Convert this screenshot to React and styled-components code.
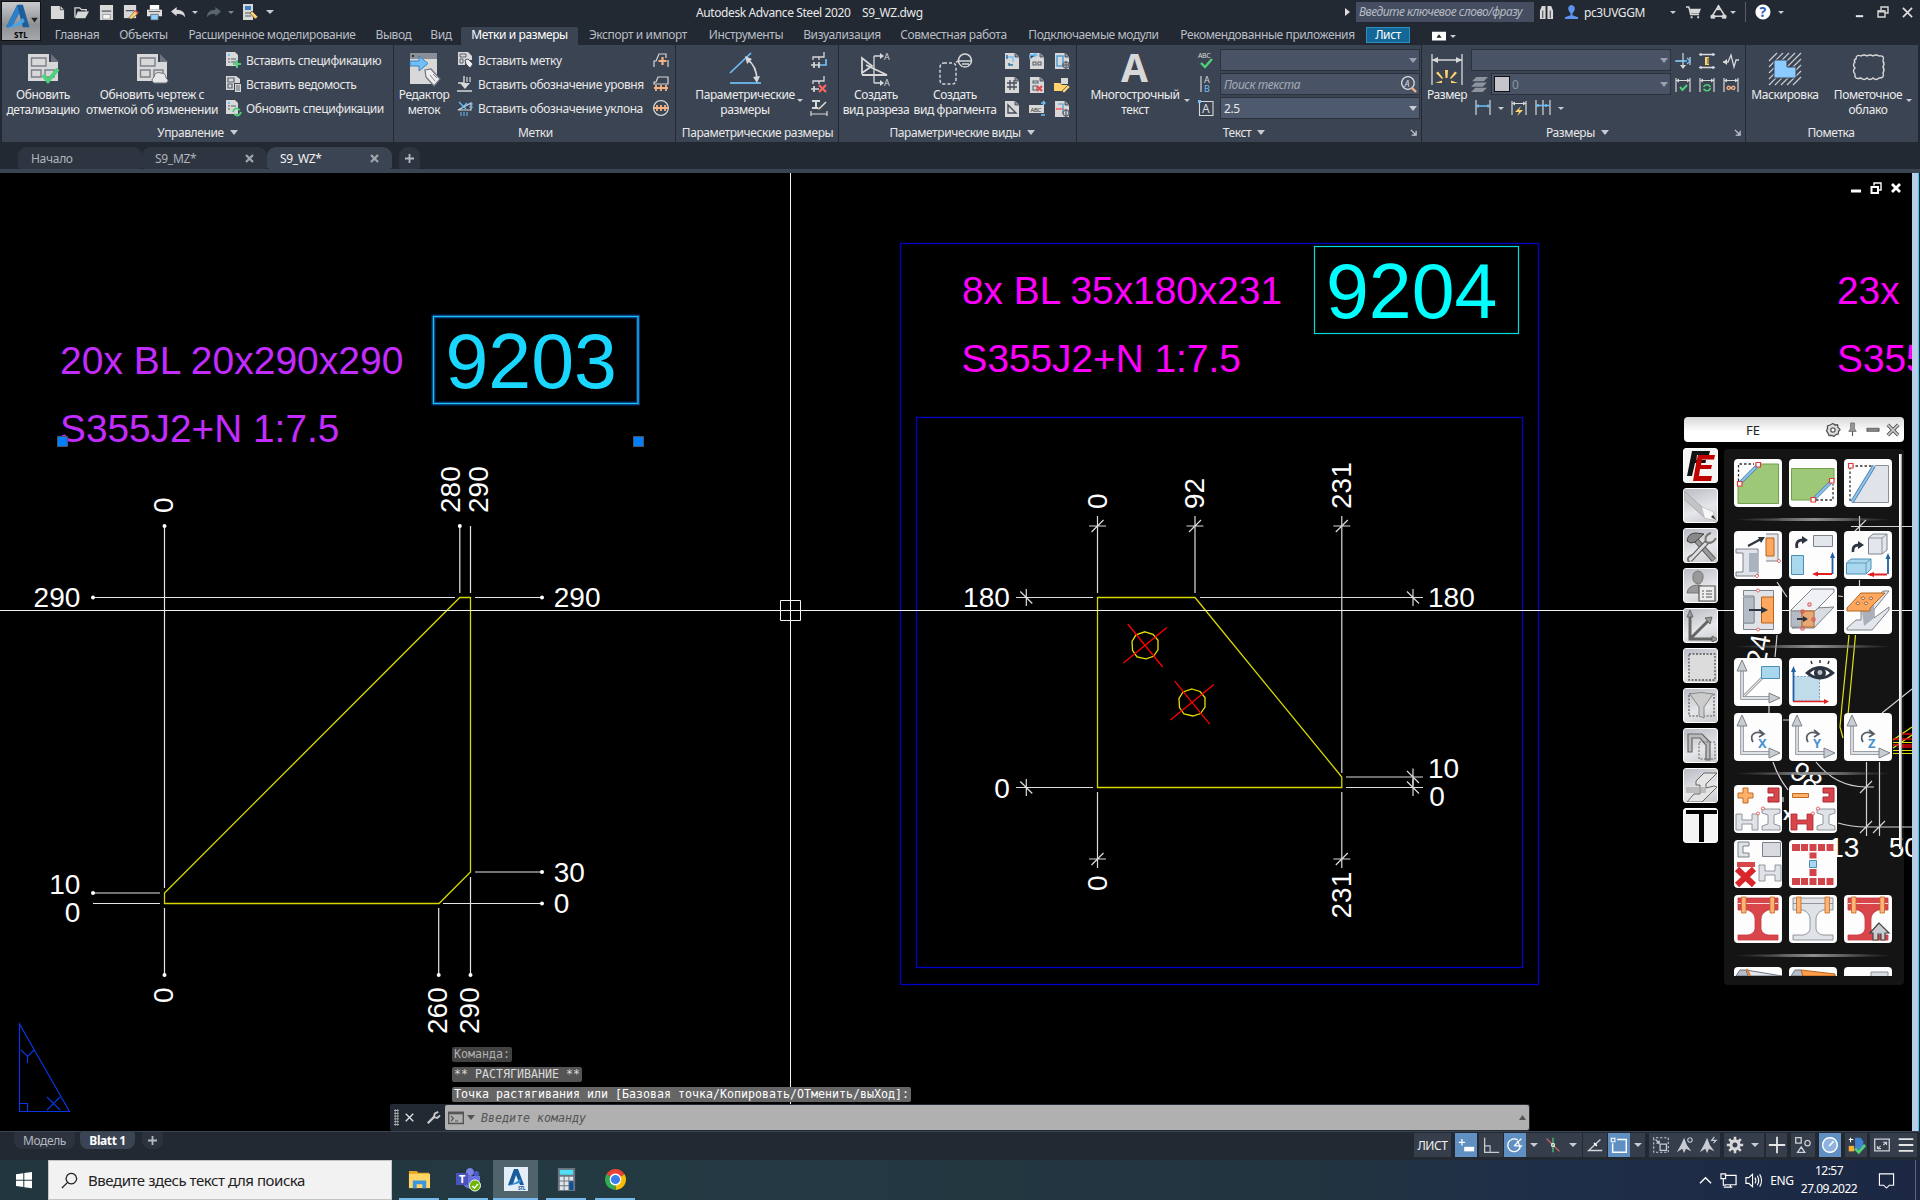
import React from 'react';
import styled, { createGlobalStyle, css } from 'styled-components';

const C = {
  dark: '#222933', panel: '#3b4453', field: '#485365', text: '#e8e8e8', dim: '#b9bdc4',
  g: '#d8d8d8', b: '#6fc0f8', o: '#f6b183', y: '#ffd26b', green: '#4fd07a', red: '#e04a4a',
};
const UI = '"Noto Sans", "Open Sans", sans-serif';

const Global = createGlobalStyle`
  html, body { margin: 0; background: #000; }
  body { width: 1920px; height: 1200px; overflow: hidden; font-family: ${UI}; }
  * { box-sizing: border-box; }
`;

/* ---------- icons: [path, stroke, fill, strokeWidth, dash] ---------- */
const G = C.g, B = C.b, O = C.o, Y = C.y, N = 'none', P = C.panel;
const sheet = [['M1 0H11L15 4V16H1Z', N, G], ['M11 0V4H15', P, '#8d939c', 0.8]];
const axes = [['M8 10V40H38', '#7d828a', N, 3.4], ['M8 10V40H38', '#dfe2e6', N, 1.8], ['M8 2L3 13H13Z', '#7d828a', '#c9cdd3', 1], ['M46 40L35 35V45Z', '#7d828a', '#c9cdd3', 1]];
const turn = ['M19 29C15 22 21 17 29 21M25 17L30 21L25 24', '#555c66', N, 1.7];
const hShape = (x, y, s, f) => [`M${x} ${y}h6v6h10v-6h6v16h-6v-6h-10v6h-6z`, s, f, 0.8];
const iShape = (x, y, s, f) => [`M${x} ${y}h18v4l-6 2v9l6 2v4h-18v-4l6-2v-9l-6-2z`, s, f, 0.8];
const bigI = (s, f) => [
  ['M4 3H44V15H34Q27 18 27 24V34Q28 39 34 40H44V45H4V40H14Q20 39 21 34V24Q21 18 14 15H4Z', s, f, 0.8],
  ['M4 8.500H44', s === '#c83a40' ? '#fff' : '#7d828a', N, 0.8],
  ['M7.500 2h4.500v16h-4.500zM36 2h4.500v16h-4.500z', '#c06a1e', '#ffb376', 0.8],
];
const dimFrame = [['M1 1V15M15 1V15M1 3.500H15', G, N, 1.2], ['M1 3.500L4 1.500V5.500ZM15 3.500L12 1.500V5.500Z', N, G]];

const ICONS = {
  new: [16, [['M1 1H11L15 5V15H1Z', N, G], ['M11 1V5H15', '#333', N, 0.8]]],
  open: [16, [['M1 13V3H6L8 5H13V7', G, N, 1.4], ['M4 7H16L12 14H1Z', N, G]]],
  save: [16, [['M1 0H15V16H1Z', N, G], ['M3 6.500H13', '#555b66', N, 1.4], ['M4 10H12V15H4Z', '#888', '#f4f4f4', 0.8]]],
  saveas: [16, [['M1 0H14V14H1Z', N, G], ['M3 6H12', '#555b66', N, 1.4], ['M6 14L13 6L16 9L9 15Z', '#444', Y, 0.6], ['M13 6L16 9', '#e55', N, 2]]],
  print: [16, [['M3 0H13V5H3Z', N, '#fff'], ['M0 5H16V12H0Z', N, '#e0e0e0'], ['M2 7H14', '#555', N, 1], ['M4 10H12V16H4Z', '#555', '#8fd0ff', 0.8]]],
  undo: [16, [['M0 7L6 2V5C12 5 15 8 15 13C13 10 10 9.500 6 9.500V12Z', N, G]]],
  redo: [16, [['M16 7L10 2V5C4 5 1 8 1 13C3 10 6 9.500 10 9.500V12Z', N, '#5b6370']]],
  props: [16, [['M1 0H11V16H1Z', N, G], ['M3 2H9V6H3Z', N, '#3c7fc0'], ['M3 9H9M3 12H9', '#555', N, 1], ['M8 9L10 7L16 13L13 15Z', '#444', Y, 0.7]]],
  upd: [32, [['M1 1H22V9H31V28H1Z', N, G], ['M24 1L32 9H24Z', N, '#6d7480'], ['M4.500 5H19V13H4.500ZM4.500 17H14V24H4.500ZM18 17H27V24H18Z', '#7a808a', N, 1.4], ['M16 22L21 28L31 16', C.green, N, 4]]],
  updc: [32, [['M1 1H22V9H31V28H1Z', N, G], ['M24 1L32 9H24Z', N, '#6d7480'], ['M4.500 5H19V13H4.500ZM4.500 17H14V24H4.500ZM18 17H27V24H18Z', '#7a808a', N, 1.4], ['M18 30Q14 27 18 24Q19 18 25 20Q30 20 30 25Q34 28 30 30Z', '#6d7480', '#e6e6e6', 1]]],
  spec: [16, [['M1 0H10L13 3V14H1Z', N, G], ['M3 2H5V4H3Z', N, B], ['M3 7H5M6 7H11M3 10H5M6 10H11', '#555b66', N, 1], ['M12 8V16M8 12H16', C.green, N, 2]]],
  ved: [16, [['M1 0H11L15 3V7H9V14H1Z', N, G], ['M3 2H9V6H3ZM3 8H7V12H3Z', '#5b626e', N, 1.2], ['M10 8H16V16H10Z', N, G], ['M11 10H15M11 12H15M11 14H15', '#555b66', N, 0.9]]],
  specu: [16, [['M1 0H10L13 3V14H1Z', N, G], ['M3 2H5V4H3Z', N, B], ['M3 6H5M6 6H11M3 9H5', '#555b66', N, 1], ['M8 12Q9 8 12 8.500L15 10M16 12Q15 15.500 12 15.500L9 14', C.green, N, 1.8]]],
  editor: [32, [['M2 0H29V31H2Z', N, G], ['M2 0H29V6H2Z', N, '#8a8f97'], ['M4 2H6V4H4Z', N, '#333'], ['M2 8H11V3L20 10.500L11 18V13H2Z', '#2d6fa8', B, 0.8], ['M17 17L23 16L32 26L26 33L18 24Z', '#6d7480', '#eee', 1.2], ['M22 22L27 28M25 21L29 25', '#888', N, 1]]],
  mark: [16, [['M1 0H11L15 4V8H8V13H1Z', N, G], ['M3 2H9V5H3ZM3 7H6V11H3Z', '#5b626e', N, 1], ['M8 8L11 7L16 12L13 16L9 12Z', '#4b5260', '#eee', 1]]],
  level: [16, [['M1 7H7V0M0 15H15', G, N, 1.4], ['M3 7H13L8 13Z', N, G], ['M10 1V6M13 1V6', G, N, 1.2]]],
  slope: [16, [['M1 10L14 3V10Z', G, N, 1.2], ['M2 2L9 9M10 3L4 9', B, N, 1.2], ['M12 4H16M12 7H16M4 12V16M7 12V16M10 12V16', B, N, 1]]],
  r1: [16, [['M1 15V9H3L6 2H13V6M15 8V15', G, N, 1.2], ['M9.500 5V13M5.500 9H13.500', O, N, 2.2]]],
  r2: [16, [['M1 8V6H3L5 1H15V8Z', G, N, 1.2], ['M1 12H15M3 9V15M8 9V15M13 9V15', O, N, 1.8]]],
  r3: [16, [['M8 0.700A7.300 7.300 0 1 1 7.900 0.700Z', G, N, 1.2], ['M1 8H15M4 5V11M8 5V11M12 5V11', O, N, 1.8]]],
  angle: [32, [['M1 20L22 0', B, N, 1.7], ['M1 30H32', B, N, 1.7], ['M18 6Q28 13 28 28', G, N, 1.6], ['M16 3L23 6L18 11ZM24 24L28 30L31 23Z', N, G]]],
  p1: [16, [['M2 8V5H8V8M8 5H13V0', G, N, 1.3], ['M0 13H9M3 10V16M8 10V16', G, N, 1.7], ['M9 13H15V7', B, N, 1.7]]],
  p2: [16, [['M2 8V5H8V8M8 5H13V0', G, N, 1.3], ['M0 13H8M3 10V16', G, N, 1.7], ['M8 9L15 16M15 9L8 16', '#ff6464', N, 2.2]]],
  p3: [16, [['M1 1H9M5 1V8M1 8H7', G, N, 2], ['M8 9L15 2', G, N, 1.6], ['M7 10Q6 7 10 7Z', N, '#d8bd84'], ['M0 14H16M0 11V16M16 11V16', G, N, 1.2]]],
  cut: [32, [['M2 5V20L12 13ZM6 12L27 22H2', G, N, 1.8], ['M14 3V30M14 3H22M14 30H22', G, N, 1.3], ['M20 0L24 3L20 6ZM20 27L24 30L20 33Z', N, G], { t: 'A', x: 24, y: 7, s: 9, c: G }, { t: 'A', x: 24, y: 33, s: 9, c: G }]],
  frag: [32, [['M5 10H13Q17 10 17 15V27Q17 31 13 31H5Q1 31 1 27V15Q1 10 5 10Z', G, N, 1.4, '3 2'], ['M17 9L20 8', G, N, 1.4], ['M26 1A6.500 6.500 0 1 1 25.900 1ZM20 8H32M23 11H30', G, N, 1.4]]],
  g1: [16, [...sheet, ['M3 4H9V9', B, N, 1.3], ['M3 2V6M5 10V12H9', '#2c6ea3', N, 1.5]]],
  g2: [16, [...sheet, ['M1 6V2H7M5 0L8 2L5 4', B, '#3b4453', 1.5], ['M4 9H7V12H4ZM9 9H12V12H9Z', '#5b626e', N, 1.1]]],
  g3: [16, [...sheet, ['M3 3H9V13H3Z', '#4d9fd8', N, 1.5], ['M9 12A3 3 0 1 1 9 12.100M12 8V16M8 12H16', '#666d78', N, 1.5]]],
  g4: [16, [...sheet, ['M3 6H13M3 10H13M6 3V13M10 3V13', '#444c58', N, 1.3]]],
  g5: [16, [...sheet, ['M4 4H9V6H4ZM4 9H8V13H4Z', '#5b626e', N, 1.1], ['M8 9L13 14M13 9L8 14', '#e04a4a', N, 2]]],
  g6: [16, [['M7 1H14V7H7Z', N, G], ['M0 6H6L8 8H14L11 14H0Z', N, Y], ['M8 14L14 8L16 10L10 16Z', '#555', Y, 0.8]]],
  g7: [16, [...sheet, ['M4 4V12H12Z', '#444c58', N, 1.4]]],
  g8: [16, [['M0 4H15V12H0Z', N, G], { t: 'ABC', x: 1.5, y: 10.5, s: 6, c: '#333' }, ['M12 2L16 2M12 14H16M14 0L16 2L14 4', B, N, 1.3]]],
  g9: [16, [...sheet, ['M2 8H10', '#ff6464', N, 1.6], ['M4 3H9V13', '#4d9fd8', N, 1.2], ['M9 12A3 3 0 1 1 9 12.100M12 8V16', '#666d78', N, 1.5]]],
  bigA: [32, [{ t: 'A', x: 2, y: 29, s: 39, c: G, b: 1 }]],
  abc: [16, [{ t: 'ABC', x: 0, y: 5.5, s: 7, c: G }, ['M3 11L7 15L14 7', C.green, N, 2.4]]],
  ab: [16, [['M3 0V16', G, N, 1.2], { t: 'A', x: 6, y: 7, s: 9, c: G }, { t: 'B', x: 6, y: 16, s: 9, c: B }]],
  abox: [16, [['M1.500 1.500H15V15.500H1.500Z', G, N, 1.1], { t: 'A', x: 4, y: 13, s: 12, c: G }, ['M0 0H3V3H0Z', N, B]]],
  find: [16, [['M7 0.700A6.300 6.300 0 1 1 6.900 0.700Z', G, N, 1.2], ['M11 12L15 16', O, N, 2.4], { t: 'A', x: 3.5, y: 10.5, s: 9, c: G }]],
  dim: [32, [['M1 1V32M31 1V32M1 7H31', G, N, 1.3], ['M1 7L7 4V10ZM31 7L25 4V10Z', N, G], ['M14 17H17L16.500 25H14.500ZM5 20L7 18.500L12 25L11 26ZM26 20L24 18.500L19 25L20 26ZM4 30L11 27.500V30ZM27 30L20 27.500V30Z', N, Y]]],
  d1: [16, [['M0 8H10M8 0V14M15 4V12', G, N, 1.2], ['M1 8H12M12 5L15 8L12 11', B, N, 1.4], ['M5 12L8 16L11 12Z', N, G]]],
  d2: [16, [['M0 1.500H16M0 14.500H16M2 0V3M14 0V3M2 13V16M14 13V16', G, N, 1.3], ['M6 4H10V12H6Z', N, Y], ['M8 6H10M8 8H10M8 10H10', P, N, 1]]],
  d3: [16, [['M0 9H5L8 2L11 14L13 7H16', G, N, 1.3], ['M0 9L4 6V12Z', N, G]]],
  d4: [16, [...dimFrame, ['M5 10L7.500 13L12 8', C.green, N, 2]]],
  d5: [16, [...dimFrame, ['M4.500 10Q6 7 9.500 8L11.500 10M11.500 11Q10 14.500 6.500 13.500L4.500 12', C.green, N, 1.6]]],
  d6: [16, [...dimFrame, ['M8 11Q5 7.500 4 11Q5 14 8 11Q11 7.500 12 11Q11 14 8 11Z', O, N, 1.3]]],
  d7: [16, [['M1 0V15M15 0V15', G, N, 1.2], ['M1 6H15M3 4.500V7.500M13 4.500V7.500', B, N, 1.5]]],
  d8: [16, [...dimFrame, ['M10 6L4 12H8L6 16L12 10H8Z', N, Y]]],
  d9: [16, [['M1 0V15M8 0V15M15 0V15', G, N, 1.2], ['M1 5.500H15M3 4V7M11 4V7', B, N, 1.4]]],
  layers: [16, [['M5 1H16L12 5H1ZM4 6H15L11 10H0ZM4 11H15L11 15H0Z', N, '#8e949d']]],
  mask: [32, [['M0 8L8 0M0 14L14 0M0 20L20 0M0 26L26 0M0 32L32 0M6 32L32 6M12 32L32 12M18 32L32 18M24 32L32 24', '#c9ccd1', N, 1.2], ['M5 7H18V14H27V25H5Z', P, '#8ccbff', 1]]],
  cloud: [32, [['M4 6Q4 1 9 3Q12 1 15 3Q18 1 21 3Q24 1 27 3Q33 2 31 8Q33 11 31 14Q33 17 31 20Q33 25 27 25Q24 28 21 25Q18 28 15 25Q12 28 9 25Q2 27 3 21Q0 18 3 15Q0 12 3 9Q1 7 4 6Z', G, N, 1.4]]],
  bino: [16, [['M1 6L3 1H7V15H1ZM9 1H13L15 6V15H9Z', N, G], ['M4 6V14M12 6V14', '#333', N, 1]]],
  user: [16, [['M8 0Q13 1 11 6L9 9V11L15 13V15H1V13L7 11V9L5 6Q3 1 8 0Z', N, '#5e94ef']]],
  cart: [16, [['M0 2H3L5 10H14', G, N, 1.6], ['M4 4H16L14 9H5Z', N, G], ['M5 12H7V14H5ZM12 12H14V14H12Z', N, G]]],
  tri: [16, [['M8 1L1 12H15Z', G, N, 1.6], ['M8 0L10 5H6ZM0 11H4V14H0ZM12 11H16V14H12Z', G, G, 1]]],
  help: [16, [['M8 0.500A7.500 7.500 0 1 1 7.900 0.500Z', N, '#fff'], { t: '?', x: 4.5, y: 13, s: 14, c: '#2d62b8', b: 1 }]],
  wmin: [12, [['M2 10H10', '#e6e6e6', N, 2.2]]],
  wres: [12, [['M4 4V1H11V7H8M1 5H8V11H1Z', '#d8d8d8', N, 1.4], ['M1 5.500H8', '#d8d8d8', N, 2]]],
  wx: [12, [['M1 1L11 11M11 1L1 11', '#e0e0e0', N, 1.8]]],
  dmin: [12, [['M1 9H11', '#fff', N, 3]]],
  dres: [12, [['M4 3.500V1H11V8H8.500', '#fff', N, 1.4], ['M1.500 5H8V11H1.500Z', '#fff', N, 2]]],
  dx: [12, [['M2 2L10 10M10 2L2 10', '#fff', N, 2.8]]],
  ribbonbtn: [16, [['M1 4H15V12H1Z', '#fff', '#fff', 2], ['M5 10L8 6L11 10Z', N, '#222']]],
  tabx: [9, [['M1 1L8 8M8 1L1 8', '#a2a7ae', N, 2.2]]],
  plus: [9, [['M4.500 0V9M0 4.500H9', '#b4b8bf', N, 1.8]]],
  wrench: [16, [['M2 14L9 7', '#c8c8c8', N, 2.6], ['M14 1L10 3L9 7L13 8L16 5', '#c8c8c8', N, 2.2]]],
  prompt: [16, [['M0.700 2.500H15.300V13.500H0.700Z', '#555', N, 1.4], ['M0 3H16', '#555', N, 2.6], ['M3 6L5.500 8.500L3 11M7 11H10', '#555', N, 1.1]]],
  launcher: [8, [['M1 1L6 6M7 2V7H2', '#c8ccd2', N, 1.4]]],
  s1: [22, [['M3 8H10M6.500 4.500V11.500', '#fff', N, 1.4], ['M9 13H20V18H9Z', N, '#fff']]],
  s2: [22, [['M4 3V19H20', '#c8ccd2', N, 1.4], ['M4 12H10V19', '#c8ccd2', N, 1.2]]],
  s3: [22, [['M14 5.500A7 7 0 1 0 17 12M10 12H19M10 12L18 4', '#fff', N, 1.5], ['M13 7Q16 9 16 14', '#fff', N, 1.3]]],
  s4: [22, [['M4 4L18 18', '#e06a6a', N, 1.3], ['M11 3V19', '#4fd07a', N, 1.3], ['M9.500 9.500H12.500V12.500H9.500Z', '#fff', N, 1]]],
  s5: [22, [['M19 17H4L17 5', '#d0d3d8', N, 1.5], ['M10 9L13 12', '#fff', N, 2]]],
  s6: [22, [['M9 5H19V19H4V9', '#fff', N, 1.6], ['M2.500 3.500H6.500V7.500H2.500Z', '#fff', N, 1.2]]],
  s7: [22, [['M3 5V3H19V19H3V5', '#c8ccd2', N, 1.2, '2.5 2'], ['M10 10H17V17H10ZM5 5L9 9M9 6V9H6', '#c8ccd2', N, 1.4]]],
  s8: [22, [['M10 3L13 11L18 18L12 15L10 20L8 15L2 19L7 10Z', N, '#c8ccd2'], ['M16.500 3A2.500 2.500 0 1 1 16.400 3', '#c8ccd2', N, 1.2]]],
  s9: [22, [['M10 3L13 11L18 18L12 15L10 20L8 15L2 19L7 10Z', N, '#c8ccd2'], ['M18 2L15 6H20L17 9', '#c8ccd2', N, 1.3]]],
  gear: [22, [['M11 6.500A4.500 4.500 0 1 1 10.900 6.500Z', '#d8d8d8', N, 3.4], ['M11 2V6M11 16V20M2 11H6M16 11H20M4.600 4.600L7.500 7.500M14.500 14.500L17.400 17.400M17.400 4.600L14.500 7.500M7.500 14.500L4.600 17.400', '#d8d8d8', N, 2.8]]],
  s11: [22, [['M11 2V20M2 11H20', '#e6e6e6', N, 2]]],
  s12: [22, [['M3 3H9V9H3ZM16 6A3 3 0 1 1 15.900 6ZM9 13L13 19H5Z', '#d0d3d8', N, 1.4]]],
  s13: [22, [['M11 3A8 8 0 1 1 10.900 3Z', '#fff', '#8fb3de', 1.6], ['M10 12L15 7', '#fff', N, 1.6]]],
  s14: [22, [['M10 3H16L19 7V16H10Z', N, '#3f82d0'], ['M3 5H8M5 3V8', '#fff', N, 1.2], ['M3 12H9V18H3Z', N, '#f2b134'], ['M10 15L14 19L21 11', C.green, N, 3]]],
  s15: [22, [['M3 4.500H19V17.500H3Z', '#d0d3d8', N, 1.4], ['M12 8H16V11M16 8L12.500 11M6 12V15H10M6 15L9.500 12', '#d0d3d8', N, 1.2]]],
  s16: [22, [['M3 4.500H19M3 11H19M3 17.500H19', '#e6e6e6', N, 2]]],
  start: [16, [['M0 2.300L7.300 1.300V7.700H0ZM8.300 1.100L16 0V7.700H8.300ZM0 8.700H7.300V15L0 14ZM8.300 8.700H16V16.300L8.300 15.200Z', N, '#fff']]],
  lens: [18, [['M11 1.500A5.500 5.500 0 1 1 10.900 1.500ZM7 11L1 17', '#222', N, 1.4]]],
  folder: [24, [['M1 3H9L11 5H22V20H1Z', N, '#e8a41c'], ['M1 6H23V21H1Z', N, '#ffd566'], ['M5 21V13H19V21H15V17H9V21Z', N, '#3a96dd']]],
  teams: [24, [['M14 1A4 4 0 1 1 13.900 1Z', N, '#7b83eb'], ['M20.500 4A2.800 2.800 0 1 1 20.400 4Z', N, '#5059c9'], ['M7 9H24V16Q24 21 17 22Q9 22 7 17Z', N, '#6a72dc'], ['M0 6H12V18H0Z', N, '#4b53bc'], { t: 'T', x: 3, y: 16, s: 11, c: '#fff', b: 1 }, ['M19 13A5.500 5.500 0 1 1 18.900 13Z', '#fff', '#6bb700', 1], ['M16 19L18.500 21L22 17', '#fff', N, 1.6]]],
  aslogo: [24, [['M0 0H24V24H0Z', N, '#e3eef9'], ['M4 18L10 2H14L20 18H16L12 8L9 17Q7 19 4 18Z', N, '#175c99'], ['M4 18Q12 16 16 12L17 15Q11 19 4 18Z', N, '#3a92d8'], { t: 'STL', x: 14, y: 23, s: 5, c: '#175c99', b: 1 }]],
  calc: [24, [['M3 0H21V24H3Z', N, '#6b7580'], ['M5 2H19V7H5Z', N, '#4fe0f8'], ['M5 9H9V13H5ZM10 9H14V13H10ZM15 9H19V13H15ZM5 14H9V18H5ZM10 14H14V18H10ZM5 19H9V23H5ZM10 19H14V23H10Z', N, '#dfe5ea'], ['M15 14H19V23H15Z', N, '#0f4f9e']]],
  chrome: [24, [['M12 12L2.500 6.500A11 11 0 0 1 21.500 6.500Z', N, '#ea4335'], ['M12 12L21.500 6.500A11 11 0 0 1 12 23Z', N, '#fbbc05'], ['M12 12L12 23A11 11 0 0 1 2.500 6.500Z', N, '#34a853'], ['M12 6.500A5.500 5.500 0 1 1 11.900 6.500Z', '#fff', '#3b7ded', 1.4]]],
  chev: [14, [['M1 10L7 4L13 10', '#fff', N, 1.5]]],
  net: [18, [['M5 3.500H17V13.500H5M4 16H13M11 13V16', '#fff', N, 1.3], ['M1 2H6V7H1ZM3.500 7V14H6', '#fff', N, 1.2]]],
  snd: [18, [['M1 6H4L8 2.500V15.500L4 12H1Z', '#fff', N, 1.2], ['M10.500 6Q12.500 9 10.500 12M13 4Q16 9 13 14M15.500 2.500Q19.500 9 15.500 15.500', '#fff', N, 1.2]]],
  note: [18, [['M1.500 2H16.500V14H12L9 17L6 14H1.500Z', '#fff', N, 1.2]]],
  pgear: [16, [['M8 1.500L10 3L12.500 2.800L13 5.500L15 7.500L13.500 9.500L13.300 12L11 12.500L9 14.500L7 13.500L4 13.500L3 11L1.500 9L2.500 6.500L2.500 4L5 3Z', '#555', '#ddd', 1.3], ['M8 5.800A2.200 2.200 0 1 1 7.900 5.800Z', '#555', '#fff', 1.3]]],
  pin: [16, [['M6 1H10V7L12 10H4L6 7Z', '#666', '#999', 0.8], ['M8 10V15', '#555', N, 1.2]]],
  pmin: [16, [['M1 6H15V9.500H1Z', '#444', '#888', 0.8]]],
  px: [16, [['M2 2L14 14M14 2L2 14', '#555', N, 4], ['M2 2L14 14M14 2L2 14', '#ccc', N, 2]]],
  /* palette categories, 35px */
  c0: [35, [['M8 2H26L25 6H13L12.500 11H22L21.500 14H11L8 27H3Z', N, '#111'], ['M14 6H31L30 10.500H18L17 16H28L27 20H16L15 27H28L27 32H9L12.500 12Z', N, '#c00000']]],
  c1: [35, [['M0 2L18 18L29 23L31 31L21 29L0 10Z', '#aaa', '#c2c4c8', 1], ['M18 18L29 23L31 31L21 29Z', N, '#f6f6f6'], ['M27 28L32 31L29 26Z', N, '#333']]],
  c2: [35, [['M11 10L30 31', '#555', N, 5.5], ['M11 10L30 31', '#999', N, 3.5], ['M3 12Q4 4 12 4L20 5L11 13L7 14Z', '#444', '#888', 1], ['M6 31L24 12', '#555', N, 5], ['M6 31L24 12', '#ddd', N, 3], ['M27 4Q20 6 22 13Q28 16 32 9M8 26Q1 29 6 34', '#777', '#ddd', 2]]],
  c3: [35, [['M14 2Q20 3 19 9Q18 15 14 15Q9 14 9 9Q8 3 14 2ZM3 24Q4 16 14 16Q22 17 23 24Z', '#777', '#999', 1], ['M15 17H31V32H15Z', '#555', '#eee', 1.2], ['M18 22H20M22 22H28M18 25H20M22 25H28M18 28H20M22 28H28', '#555', N, 1.2]]],
  c4: [35, [['M6 5V30H31M6 30L26 10', '#666', N, 3], ['M3 8L6 1L9 8ZM28 27L34 30L28 33ZM21 9L28 8L26 15Z', '#555', '#999', 0.8]]],
  c5: [35, [['M5 5H31V31H5Z', '#555', '#dcdcdc', 1.3, '2 1.5']]],
  c6: [35, [['M5 5H30V27H5Z', '#555', N, 1.2, '2 1.5'], ['M6 5Q17 2 29 5L20 18V29L15 27V18Z', '#888', '#ccc', 1]]],
  c7: [35, [['M4 5H18L26 13V31H22V16L16 9H8V23H4Z', '#666', '#bbb', 1.2], ['M15 13H31V30H15Z', '#666', N, 1, '2 1.5']]],
  c8: [35, [['M12 12L20 4H33L22 15V19L30 17L33 18L18 33H3L10 25H16V16H12Z', '#666', '#e4e4e4', 1], ['M2 18H22V24H2Z', N, '#a8a8a8aa']]],
  c9: [35, [['M2 1H33V5H20V34H15V5H2Z', N, '#000']]],
  /* palette commands, 48px */
  f0: [48, [['M24 5H44.500V44.500H4V26Z', '#72a04e', '#9dc877', 1], ['M4.500 22V5H20', '#333', N, 1.3, '2.5 2'], ['M6 24L24 6', '#4c7fa8', N, 3.6], ['M6 24L24 6', '#8cc4f2', N, 2], ['M3.500 22.500h4.500v4.500h-4.500zM22 3.500h4.500v4.500h-4.500z', '#e03c3c', '#fff', 1.2]]],
  f1: [48, [['M2.500 9.500H45V21L23 41H2.500Z', '#72a04e', '#9dc877', 1], ['M27 41H44V25', '#333', N, 1.3, '2.5 2'], ['M25 40L42 23', '#4c7fa8', N, 3.6], ['M25 40L42 23', '#8cc4f2', N, 2], ['M22 38.500h4.500v4.500h-4.500zM40.500 19.500h4.500v4.500h-4.500z', '#e03c3c', '#fff', 1.2]]],
  f2: [48, [['M31 6.500H44.500V43.500H8Z', '#8a9099', '#e0e4ea', 1], ['M6 42V7H28', '#333', N, 1.3, '2.5 2'], ['M8 43L30 7', '#4c7fa8', N, 3.6], ['M8 43L30 7', '#8cc4f2', N, 2], ['M4.500 4.500h4.500v4.500h-4.500z', '#e03c3c', '#fff', 1.2]]],
  f3: [48, [['M2 18H24V45H2V41H9V22H2Z', '#7d828a', '#e0e4ea', 1], ['M15 22H24V41H15Z', N, '#aab2bf'], ['M32 3H44V30H32', '#7d828a', '#e6e8ec', 1], ['M32 7H40V25H32Z', '#b5641c', '#ffa75e', 1], ['M14 15L27 8', '#2b3440', N, 2.2], ['M24 6L31 6L27 12Z', N, '#2b3440'], ['M23 43.500a1.500 1.500 0 1 1-.1 0zM45 28.500a1.500 1.500 0 1 1-.1 0z', '#e05050', '#fff', 1]]],
  f4: [48, [['M2.500 24.500H14.500V43.500H2.500Z', '#4c8fb5', '#a9d8ee', 1], ['M24.500 4.500H43.500V15.500H24.500Z', '#7d828a', '#e3e6ec', 1], ['M8 17Q6 9 14 9', '#2b3440', N, 2.8], ['M13 5L19 9L13 13Z', N, '#2b3440'], ['M43.500 43V24', '#1f5fa8', N, 1.8], ['M41 27L43.500 21L46 27Z', N, '#1f5fa8'], ['M43 43H26', '#e02020', N, 1.8], ['M29 40.500L23 43L29 45.500Z', N, '#e02020']]],
  f5: [48, [['M24.500 7L29 3H43V19L38 23H24.500Z', '#7d828a', '#e3e6ec', 1], ['M24.500 7H38V23M38 7L43 3', '#7d828a', N, 0.8], ['M2.500 32L7 28H27V38L22 43H2.500Z', '#4c8fb5', '#a9d8ee', 1], ['M2.500 32H22V43M22 32L27 28', '#4c8fb5', N, 0.8], ['M9 21Q8 14 15 14', '#2b3440', N, 2.8], ['M14 10L20 14L14 18Z', N, '#2b3440'], ['M44 43V25', '#1f5fa8', N, 1.8], ['M41.500 28L44 22L46.500 28Z', N, '#1f5fa8'], ['M43 43.500H26', '#e02020', N, 1.8], ['M30 41L23 43.500L30 46Z', N, '#e02020']]],
  f6: [48, [['M9.500 4.500H39.500V43.500H9.500V37H20V10H9.500Z', '#7d828a', '#dfe3e8', 1], ['M9.500 11H20V37H9.500Z', '#8a9099', '#b4bcc8', 1], ['M27.500 11H39.500V37H27.500Z', '#b5641c', '#ffa75e', 1], ['M15 24H29', '#2b3440', N, 2], ['M27 20.500L34 24L27 27.500Z', N, '#2b3440'], ['M24 3a1.500 1.500 0 1 1-.1 0zM24 42a1.500 1.500 0 1 1-.1 0z', '#e05050', '#fff', 1]]],
  f7: [48, [['M12 40L22 31V22H27L45 21L25 42H3Z', '#7d828a', '#d9dce2', 1], ['M2 24L23 3H45V6L26 25H2Z', '#7d828a', '#f0f1f4', 1], ['M2 25H13V41H2Z', '#7d828a', '#b4bac4', 0.8], ['M13 25H25V41H13Z', '#b5641c', '#e6a876', 1], ['M8 33H15', '#2b3440', N, 2], ['M14 30L19 33L14 36Z', N, '#2b3440'], ['M12 24h3v3h-3zM19 17h3v3h-3zM12 41h3v3h-3zM23 32h3v3h-3z', '#e05050', N, 1]]],
  f8: [48, [['M3 42L12 34H17V24L30 14V32L45 21V24L28 44H3Z', '#7d828a', '#e3e6ec', 1], ['M28 26L45 5H39L24 22Z', '#7d828a', '#e3e6ec', 1], ['M18 25L30 18V32L20 40Z', N, '#aab0ba'], ['M3 22L17 7H41L26 22V25H3Z', '#b5641c', '#ffa75e', 1], ['M19 11a1.800 1.300 0 1 1-.1 0zM27 11a1.800 1.300 0 1 1-.1 0zM14 16a1.800 1.300 0 1 1-.1 0zM22 16a1.800 1.300 0 1 1-.1 0z', '#a85a18', '#e8e8e8', 1]]],
  f9: [48, [...axes, ['M10 38L29 19', '#7d828a', N, 2.6], ['M10 38L29 19', '#e8e8e8', N, 1.2], ['M27.500 8.500H45.500V20.500H27.500Z', '#4c8fb5', '#a9d8ee', 1]]],
  f10: [48, [['M4.500 18.500H30.500V43H4.500Z', '#7a9fb5', '#c0dcea', 1, '2 1.5'], ['M4.500 43V13', '#1f5fa8', N, 1.8], ['M2 14L4.500 8L7 14Z', N, '#1f5fa8'], ['M4 43.500H36', '#e02020', N, 1.6], ['M35 41L40 43.500L35 46Z', N, '#e02020'], ['M16 15Q31 1 46 15Q31 28 16 15Z', N, '#2b3440'], ['M21 15Q31 6 41 15Q31 23 21 15Z', N, '#fff'], ['M31 9A6 6 0 1 1 30.900 9Z', N, '#2b3440'], ['M31 12A2.500 2.500 0 1 1 30.900 12Z', N, '#b8bcc2'], ['M31 2V5M22 3L23 6M40 3L39 6', '#2b3440', N, 1.5]]],
  f11: [48, [...axes, turn, { t: 'X', x: 24, y: 35, s: 13, c: '#4a94cf', b: 1 }]],
  f12: [48, [...axes, turn, { t: 'Y', x: 24, y: 35, s: 13, c: '#4a94cf', b: 1 }]],
  f13: [48, [...axes, turn, { t: 'Z', x: 24, y: 35, s: 13, c: '#4a94cf', b: 1 }]],
  f14: [48, [['M9 3H14V8H19V13H14V18H9V13H4V8H9Z', '#c06a1e', '#ffb06a', 1], ['M34 3H45V17H34V12H40V8H34Z', '#a82c32', '#d8454b', 1], hShape(2, 29, '#7d828a', '#dfe2e6'), iShape(28, 24, '#7d828a', '#dfe2e6'), ['M24 27a1.500 1.500 0 1 1-.1 0zM29 22a1.500 1.500 0 1 1-.1 0z', '#e05050', '#fff', 1]]],
  f15: [48, [['M3.500 8.500H19.500V12.500H3.500Z', '#c06a1e', '#ffb06a', 1], ['M34 3H45V17H34V12H40V8H34Z', '#a82c32', '#d8454b', 1], hShape(2, 29, '#a82c32', '#d8454b'), iShape(28, 24, '#7d828a', '#dfe2e6'), ['M24 27a1.500 1.500 0 1 1-.1 0zM29 22a1.500 1.500 0 1 1-.1 0z', '#e05050', '#fff', 1]]],
  f16: [48, [['M4 2H15V6H9V13H15V17H4Z', '#7d828a', '#dfe2e6', 1], ['M28.500 2.500H46.500V16.500H28.500Z', '#7d828a', '#d8dbe0', 1], ['M3 22H21V27H3Z', N, '#d8454b'], ['M3 29L20 45M20 29L3 45', '#d8262c', N, 6], hShape(25, 25, '#7d828a', '#dfe2e6')]],
  f17: [48, [['M3 4h8v7h-8zM12 4h7v7h-7zM20.500 4h7v7h-7zM29 4h7v7h-7zM37.500 4h7v7h-7zM20.500 12.500h7v6h-7zM20.500 29h7v7h-7zM3 38h8v7h-8zM12 38h7v7h-7zM20.500 38h7v7h-7zM29 38h7v7h-7zM37.500 38h7v7h-7z', N, '#d0444a'], ['M20.500 20.500h7v7h-7z', '#4c8fb5', '#a9d8ee', 1]]],
  f18: [48, bigI('#c83a40', '#d8454b')],
  f19: [48, bigI('#7d828a', '#dfe2e6')],
  f20: [48, [...bigI('#c83a40', '#d8454b'), ['M35 28L26 38H29V45H34V39H37V45H41V38H45Z', '#444', '#c9cdd3', 1.2]]],
  f21: [48, [['M2 9L6 3H12L16 9Z', '#6b7580', '#b4bcc8', 1], ['M12 3L48 9H14Z', '#6b7580', '#e3e6ec', 1], ['M13 2L16 9', '#e08030', N, 2]]],
  f22: [48, [['M2 9L6 3H12L16 9Z', '#6b7580', '#b4bcc8', 1], ['M12 3L46 7V9H14Z', '#b5641c', '#ff9d4c', 1]]],
  f23: [48, [['M27 5H44V10H27Z', '#8a9099', '#d8dbe0', 1]]],
};

const Svg = styled.svg`display: block; flex: none; overflow: visible;`;
const Glyph = styled.text`font-family: ${UI}; font-weight: ${p => (p.$bold ? 700 : 400)};`;
function Icon({ n, size }) {
  const [vb, parts] = ICONS[n];
  const s = size || vb;
  return (
    <Svg width={s} height={s} viewBox={`0 0 ${vb} ${vb}`}>
      {parts.map((p, i) => Array.isArray(p)
        ? <path key={i} d={p[0]} stroke={p[1]} fill={p[2]} strokeWidth={p[3] || 1} strokeDasharray={p[4]} />
        : <Glyph key={i} x={p.x} y={p.y} fontSize={p.s} fill={p.c} $bold={p.b}>{p.t}</Glyph>)}
    </Svg>
  );
}

const Caret = styled.i`
  flex: none; width: 0; height: 0; margin: ${p => p.$m || '0'};
  border: ${p => p.$s || 4}px solid transparent; border-bottom: 0;
  border-top: ${p => (p.$s || 4) + (p.$s ? 0 : 1)}px solid ${p => p.$c || '#c8ccd2'};
`;
const Gap = styled.div`flex: none; width: ${p => p.$w}px;`;
const Cell = styled.div`
  flex: none; width: ${p => p.$w}px; display: flex; align-items: center;
  justify-content: ${p => p.$j || 'center'};
`;

/* ---------- title and tabs ---------- */
const Screen = styled.div`
  width: 1920px; height: 1200px; display: flex; flex-direction: column;
  background: ${C.dark}; color: ${C.text}; font-size: 12px; letter-spacing: -0.4px; cursor: default;
`;
const Top = styled.header`height: 45px; display: flex; flex: none;`;
const AppButton = styled.div`
  width: 40px; height: 40px; margin: 1px 0 0 1px; flex: none; border: 1px solid #111;
  background: linear-gradient(#c9cacc, #8d9094 60%, #a6a8ab); display: flex; flex-direction: column; align-items: center;
  color: #000; font-size: 8px; font-weight: 700; letter-spacing: 0.2px; line-height: 9px;
`;
const TopRows = styled.div`flex: 1; display: flex; flex-direction: column;`;
const TitleRow = styled.div`height: 24px; margin-bottom: 1px; display: flex; align-items: center; white-space: pre;`;
const KeySearch = styled.div`
  width: 178px; height: 20px; margin-bottom: 1px; background: #454e60; color: #b4b9c2; font-style: italic;
  padding-left: 3px; line-height: 19px; letter-spacing: -0.5px;
`;
const Tabs = styled.nav`height: 20px; display: flex; padding: 2px 0 0 4px;`;
const Tab = styled.div`
  width: ${p => p.$w}px; height: 18px; line-height: 16px; text-align: center; white-space: nowrap; color: ${C.dim};
  ${p => p.$on && css`background: ${C.panel}; color: #fff; border-radius: 2px 2px 0 0;`}
  ${p => p.$ctx && css`background: #146796; border: 1px solid #2b8fc4; height: 16px; line-height: 14px; color: #fff;`}
`;
const RIBBON_TABS = [['Главная', 64], ['Объекты', 69], ['Расширенное моделирование', 188], ['Вывод', 55], ['Вид', 40], ['Метки и размеры', 117], ['Экспорт и импорт', 120], ['Инструменты', 96], ['Визуализация', 96], ['Совместная работа', 127], ['Подключаемые модули', 153], ['Рекомендованные приложения', 195]];
const QAT = [['new', 24], ['open', 25], ['save', 24], ['saveas', 24], ['print', 24], ['undo', 24]];

function Header() {
  return (
    <Top>
      <AppButton>
        <Svg width="36" height="28" viewBox="0 0 36 30">
          <path d="M2 27L14 3H20L27 27H20L16 12L10 23Q7 28 2 27Z" fill="#1c5d9c" />
          <path d="M2 27Q14 25 20 17L22 21Q14 29 2 27Z" fill="#48a3e6" />
          <path d="M14 3L16 12L10 23Q7 28 2 27Z" fill="#2d7fc6" />
          <path d="M29 17H36L32.500 22Z" fill="#222" />
        </Svg>
        STL
      </AppButton>
      <TopRows>
        <TitleRow>
          <Gap $w={4} />
          {QAT.map(([n, w]) => <Cell key={n} $w={w}><Icon n={n} size={15} /></Cell>)}
          <Cell $w={10}><Caret $s={3} /></Cell>
          <Cell $w={26}><Icon n="redo" size={15} /></Cell>
          <Cell $w={10}><Caret $s={3} $c="#7d838d" /></Cell>
          <Cell $w={28}><Icon n="props" size={16} /></Cell>
          <Cell $w={12}><Caret $s={4} /></Cell>
          <Gap $w={420} />
          <Cell $w={166} $j="flex-start">Autodesk Advance Steel 2020</Cell>
          <Cell $w={482} $j="flex-start">S9_WZ.dwg</Cell>
          <Cell $w={7}><Svg width="5" height="8"><path d="M0 0L5 4L0 8Z" fill="#ddd" /></Svg></Cell>
          <Gap $w={5} />
          <KeySearch>Введите ключевое слово/фразу</KeySearch>
          <Cell $w={25}><Icon n="bino" size={15} /></Cell>
          <Cell $w={25}><Icon n="user" size={15} /></Cell>
          <Cell $w={84} $j="flex-start">pc3UVGGM</Cell>
          <Cell $w={9}><Caret $s={3} /></Cell>
          <Cell $w={33}><Icon n="cart" size={15} /></Cell>
          <Cell $w={17}><Icon n="tri" size={15} /></Cell>
          <Cell $w={11}><Caret $s={3} /></Cell>
          <Cell $w={14}><Svg width="1" height="20"><path d="M0 0H1V20H0Z" fill="#555d6b" /></Svg></Cell>
          <Cell $w={22}><Icon n="help" size={16} /></Cell>
          <Cell $w={13}><Caret $s={3} /></Cell>
          <Gap $w={63} />
          <Cell $w={18}><Icon n="wmin" size={11} /></Cell>
          <Cell $w={30}><Icon n="wres" size={12} /></Cell>
          <Cell $w={18}><Icon n="wx" size={11} /></Cell>
        </TitleRow>
        <Tabs>
          {RIBBON_TABS.map(([t, w], i) => <Tab key={t} $w={w} $on={i === 5}>{t}</Tab>)}
          <Gap $w={1} /><Tab $w={44} $ctx>Лист</Tab>
          <Gap $w={20} /><Cell $w={18}><Icon n="ribbonbtn" size={14} /></Cell><Cell $w={10}><Caret $s={3} /></Cell>
        </Tabs>
      </TopRows>
    </Top>
  );
}

/* ---------- ribbon ---------- */
const Ribbon = styled.section`height: 97px; flex: none; display: flex; padding-left: 2px;`;
const Panel = styled.div`width: ${p => p.$w}px; flex: none; background: ${C.panel}; border-right: 1px solid ${C.dark}; display: flex; flex-direction: column;`;
const Body = styled.div`height: 78px; display: flex;`;
const PanelTitle = styled.div`height: 18px; display: flex; padding-right: 2px; padding-left: ${p => p.$pl || 0}px;`;
const TitleText = styled.div`flex: 1; display: flex; align-items: center; justify-content: center; gap: 6px; white-space: nowrap;`;
const Big = styled.div`
  width: ${p => p.$w}px; margin-left: ${p => p.$ml || 0}px; flex: none; padding-top: 8px;
  display: flex; flex-direction: column; align-items: center; gap: 2px;
  line-height: 15px; text-align: center; white-space: pre; color: #ececec;
`;
const Rows = styled.div`padding-top: 3px; margin-left: ${p => p.$ml || 0}px; width: ${p => p.$w}px; flex: none;`;
const Row = styled.div`height: 24px; display: flex; align-items: center; gap: ${p => (p.$gap === undefined ? 5 : p.$gap)}px; white-space: nowrap;`;
const Drop = styled.div`width: 7px; margin-left: ${p => p.$ml}px; padding-top: 57px; flex: none;`;
const IconGrid = styled.div`
  display: grid; grid-template-columns: repeat(3, ${p => p.$pitch}px); grid-auto-rows: 24px; align-items: center;
  align-content: start; padding-top: 4px; margin-left: ${p => p.$ml}px; flex: none;
`;
const Field = styled.div`
  width: ${p => p.$w}px; height: 22px; flex: none; background: ${p => (p.$lit ? '#4d596d' : C.field)}; border: 1px solid #2b323e;
  display: flex; align-items: center; justify-content: space-between; padding: 0 2px 0 3px;
  color: ${p => (p.$hint ? '#a4abb7' : C.text)}; font-style: ${p => (p.$hint ? 'italic' : 'normal')};
`;
const Swatch = styled.span`width: 16px; height: 16px; background: #c4c6cc; border: 1px solid #111; margin: 0 2px 0 -1px;`;
const LayerName = styled.span`flex: 1; color: #8e97a6;`;

function BigButton({ icon, text, ...rest }) {
  return <Big {...rest}><Icon n={icon} size={32} /><span>{text}</span></Big>;
}
function Title({ children, drop, launcher, pl }) {
  return (
    <PanelTitle $pl={pl}>
      <TitleText>{children}{drop && <Caret />}</TitleText>
      {launcher && <Cell $w={12}><Icon n="launcher" size={7} /></Cell>}
    </PanelTitle>
  );
}
const rows = list => list.map(([n, t]) => <Row key={n}><Icon n={n} />{t}</Row>);

function RibbonBar() {
  return (
    <Ribbon>
      <Panel $w={392}>
        <Body>
          <BigButton $w={82} icon="upd" text={'Обновить\nдетализацию'} />
          <BigButton $w={136} icon="updc" text={'Обновить чертеж с\nотметкой об изменении'} />
          <Rows $ml={5} $w={166}>{rows([['spec', 'Вставить спецификацию'], ['ved', 'Вставить ведомость'], ['specu', 'Обновить спецификации']])}</Rows>
        </Body>
        <Title drop pl={2}>Управление</Title>
      </Panel>
      <Panel $w={282}>
        <Body>
          <BigButton $w={60} icon="editor" text={'Редактор\nметок'} />
          <Rows $ml={3} $w={193}>{rows([['mark', 'Вставить метку'], ['level', 'Вставить обозначение уровня'], ['slope', 'Вставить обозначение уклона']])}</Rows>
          <Rows $ml={3} $w={16}>{rows([['r1'], ['r2'], ['r3']])}</Rows>
        </Body>
        <Title pl={4}>Метки</Title>
      </Panel>
      <Panel $w={163}>
        <Body>
          <BigButton $w={118} $ml={10} icon="angle" text={'Параметрические\nразмеры'} />
          <Drop $ml={-7}><Caret $s={3} /></Drop>
          <Rows $ml={7} $w={16}>{rows([['p1'], ['p2'], ['p3']])}</Rows>
        </Body>
        <Title pl={3}>Параметрические размеры</Title>
      </Panel>
      <Panel $w={238}>
        <Body>
          <BigButton $w={74} icon="cut" text={'Создать\nвид разреза'} />
          <BigButton $w={84} icon="frag" text={'Создать\nвид фрагмента'} />
          <IconGrid $pitch={25} $ml={7}>{[1, 2, 3, 4, 5, 6, 7, 8, 9].map(i => <Icon key={i} n={`g${i}`} />)}</IconGrid>
        </Body>
        <Title drop pl={11}>Параметрические виды</Title>
      </Panel>
      <Panel $w={345}>
        <Body>
          <BigButton $w={116} icon="bigA" text={'Многострочный\nтекст'} />
          <Drop $ml={-9}><Caret $s={3} /></Drop>
          <Rows $ml={7} $w={22}>{rows([['abc'], ['ab'], ['abox']])}</Rows>
          <Rows $w={199}>
            <Row><Field $w={200}><span /><Caret $c="#9aa1ad" /></Field></Row>
            <Row><Field $w={200} $hint>Поиск текста<Icon n="find" /></Field></Row>
            <Row><Field $w={200} $lit>2.5<Caret /></Field></Row>
          </Rows>
        </Body>
        <Title drop launcher pl={4}>Текст</Title>
      </Panel>
      <Panel $w={324}>
        <Body>
          <BigButton $w={50} icon="dim" text="Размер" />
          <Rows $ml={-1} $w={200}>
            <Row><Field $w={200}><span /><Caret $c="#9aa1ad" /></Field></Row>
            <Row $gap={3}><Icon n="layers" size={17} /><Field $w={180}><Swatch /><LayerName>0</LayerName><Caret $c="#9aa1ad" /></Field></Row>
            <Row $gap={0}>
              <Gap $w={4} /><Icon n="d7" /><Cell $w={20}><Caret $s={3} /></Cell><Icon n="d8" /><Gap $w={8} /><Icon n="d9" /><Cell $w={20}><Caret $s={3} /></Cell>
            </Row>
          </Rows>
          <IconGrid $pitch={24} $ml={4}>{[1, 2, 3, 4, 5, 6].map(i => <Icon key={i} n={`d${i}`} />)}</IconGrid>
        </Body>
        <Title drop launcher pl={2}>Размеры</Title>
      </Panel>
      <Panel $w={173}>
        <Body>
          <BigButton $w={78} icon="mask" text="Маскировка" />
          <BigButton $w={88} icon="cloud" text={'Пометочное\nоблако'} />
          <Drop $ml={-6}><Caret $s={3} /></Drop>
        </Body>
        <Title>Пометка</Title>
      </Panel>
    </Ribbon>
  );
}

/* ---------- document tabs ---------- */
const DocTabs = styled.div`height: 31px; flex: none; padding: 5px 0 0 18px; display: flex; border-bottom: 4px solid ${C.panel};`;
const DocTab = styled.div`
  width: ${p => p.$w}px; height: 22px; margin-right: ${p => p.$mr || 0}px; padding: 0 ${p => (p.$plus ? 6 : 13)}px; display: flex; align-items: center; justify-content: space-between;
  background: ${p => (p.$on ? C.panel : '#2e3541')}; color: ${p => (p.$on ? '#f2f2f2' : '#b0b4bb')};
  border-radius: 9px 9px 3px 3px; letter-spacing: -0.3px;
`;

/* ---------- drawing ---------- */
const Work = styled.main`position: relative; height: 958px; flex: none; background: #000; overflow: hidden;`;
const Sheet = styled.svg`display: block; font-family: "Liberation Sans", Arial, sans-serif; letter-spacing: 0;`;
const Num = ({ x, y, end, children }) => <text x={x - 0.7} y={y - 0.4} fontSize="28" fill="#fff" textAnchor={end ? 'end' : 'start'}>{children}</text>;
const VNum = ({ x, y, r = -90, children }) => <text transform={`translate(${x - 0.7} ${y}) rotate(${r})`} fontSize="28" fill="#fff">{children}</text>;
const Dots = ({ at }) => at.map(([x, y]) => <circle key={`${x},${y}`} cx={x} cy={y} r="2" fill="#fff" />);
const TickV = ({ x, y }) => <path d={`M${x - 8.5} ${y}h17M${x - 6} ${y + 6}l12-12`} />;
const TickH = ({ x, y }) => <path d={`M${x} ${y - 8.5}v17M${x - 6} ${y - 6}l12 12`} />;
const Hole = ({ x, y }) => (
  <>
    <polygon points="0,-13.500 8,-11 13,-5 13,4.500 8.500,11 1,13.500 -8,11.500 -12.500,5 -13,-4 -9,-10.500" transform={`translate(${x} ${y})`} stroke="#e8e000" strokeWidth="1.3" />
    <path d={`M${x - 17.3} ${y - 21.3}l35 43M${x - 21.6} ${y + 17.6}l43.500-35.500`} stroke="#f00" strokeWidth="1.3" />
  </>
);

function Drawing() {
  return (
    <Sheet width="1912" height="958" viewBox="0 173 1912 958" fill="none">
      {/* part 9203 */}
      <g fill="#c22cff" stroke="none" fontSize="39">
        <text x="60" y="374">20x BL 20x290x290</text>
        <text x="60" y="442" fontSize="38.8">S355J2+N 1:7.5</text>
      </g>
      <rect x="433.500" y="316.500" width="204.500" height="87" stroke="#06306f" strokeWidth="4" />
      <rect x="433.500" y="316.500" width="204.500" height="87" stroke="#19c4f5" strokeWidth="1.300" />
      <text x="445.500" y="388" fontSize="77" fill="#19d7ff">9203</text>
      <path d="M57.500 436.500h10v10h-10zM633.500 436.500h10v10h-10z" fill="#0080ff" stroke="#4d5560" />
      <g stroke="#e4e4e4" strokeWidth="1.200">
        <path d="M164.500 526V888M164.500 908V975M459.800 526V593M470.500 526V593M93 597.500H455M475 597.500H542" />
        <path d="M93 893H160M93 903.500H160M475 872H542M443 903.500H542M438.700 908V975M470.500 877V975" />
      </g>
      <Dots at={[[164.5, 526], [459.8, 526], [93, 597.5], [542, 597.5], [93, 893], [542, 872], [542, 903.5], [164.5, 975], [438.7, 975], [470.5, 975]]} />
      <path d="M459.800 597.500H470.500V872L439 903.500H164.500V893Z" stroke="#d8d800" strokeWidth="1.300" />
      <Num x={81} y={607} end>290</Num><Num x={554.5} y={607}>290</Num>
      <Num x={81} y={894} end>10</Num><Num x={81} y={922} end>0</Num>
      <Num x={554.5} y={882}>30</Num><Num x={554.5} y={913}>0</Num>
      <VNum x={174} y={513}>0</VNum><VNum x={460.7} y={513}>280</VNum><VNum x={488.7} y={513}>290</VNum>
      <VNum x={174} y={1003}>0</VNum><VNum x={448} y={1034}>260</VNum><VNum x={480} y={1034}>290</VNum>

      {/* part 9204 */}
      <rect x="900.500" y="243.500" width="638" height="741" stroke="#0000c8" strokeWidth="1.300" />
      <rect x="916.500" y="417.500" width="606" height="550" stroke="#0000c8" strokeWidth="1.300" />
      <g fill="#f0f" fontSize="38.8">
        <text x="962" y="304">8x BL 35x180x231</text>
        <text x="961.500" y="372">S355J2+N 1:7.5</text>
        <text x="1837" y="304">23x</text>
        <text x="1837" y="372">S355J2+N 1:7.5</text>
      </g>
      <rect x="1314.500" y="246.500" width="204" height="87" stroke="#00dcdc" strokeWidth="1.200" />
      <text x="1326" y="318" fontSize="77" fill="#0ff">9204</text>
      <g stroke="#dcdcdc" strokeWidth="1.200">
        <path d="M1097.500 516V593M1195 516V593M1341.800 516V773M1016 597.500H1093M1200 597.500H1423M1016 787.500H1093" />
        <path d="M1346 777H1423M1346 787.500H1423M1097.500 792V868M1341.800 792V868" />
        <TickV x={1097.5} y={526} /><TickV x={1195} y={526} /><TickV x={1341.8} y={526} /><TickV x={1097.5} y={859} /><TickV x={1341.8} y={859} />
        <TickH x={1026.3} y={597.5} /><TickH x={1413} y={597.5} /><TickH x={1026.3} y={787.5} /><TickH x={1413} y={777} /><TickH x={1413} y={787.5} />
      </g>
      <path d="M1097.500 597.500H1195L1341.800 777V787.500H1097.500Z" stroke="#d8d800" strokeWidth="1.300" />
      <Hole x={1145} y={645.3} /><Hole x={1192} y={702.5} />
      <Num x={1010.5} y={607} end>180</Num><Num x={1428.7} y={607}>180</Num><Num x={1010.5} y={798} end>0</Num>
      <Num x={1428.7} y={778}>10</Num><Num x={1430} y={806}>0</Num>
      <VNum x={1107.7} y={509}>0</VNum><VNum x={1204.7} y={509}>92</VNum><VNum x={1352} y={509}>231</VNum>
      <VNum x={1107.7} y={891}>0</VNum><VNum x={1352} y={918.5}>231</VNum>

      {/* neighbouring view seen through the palette */}
      <g stroke="#d0d0d0" strokeWidth="1.200">
        <path d="M1851 526.500H1912M1859.500 516V531M1854 532L1866 520M1859.500 580V586M1777 582L1787 597M1838 596L1843 596.500M1777 635L1775 657M1769 690V713M1783 720H1789" />
        <path d="M1912 689L1882 713M1773 762Q1778 777 1788 790M1816 762Q1836 787 1866 787H1874M1838 823Q1852 827 1866 827H1912M1866.500 762V836M1879.500 762V836M1860 793L1872 781M1860 833L1872 821M1873 833L1885 821M1783 797V802" />
      </g>
      <path d="M1849 635L1842 705L1840 727L1843 738M1855.500 635L1848 715M1893 740L1912 727M1893 748L1912 735M1893 750.500H1912M1893 753.500H1912M1893 742.500H1912" stroke="#e0e000" strokeWidth="1.200" />
      <path d="M1901 734H1912M1893 739H1912M1893 745H1912M1898 747H1912" stroke="#e00000" strokeWidth="1.300" />
      <VNum x={1766} y={667} r={-80}>24</VNum>
      <VNum x={1789} y={775} r={38}>98</VNum>
      <text x="1783" y="820" fontSize="18" fontWeight="700" fill="#fff">x</text>
      <Num x={1829} y={857}>13</Num><Num x={1889.5} y={857}>50</Num>

      {/* coordinate icon */}
      <path d="M19.500 1024V1111.500H69.500ZM19.500 1103.500H27.500V1111.500M21 1050L27.500 1056.500L34 1050M27.500 1056.500V1063M47 1097L60 1110M60 1097L47 1110" stroke="#0a35e0" strokeWidth="1.200" />

      {/* crosshair */}
      <path d="M790.500 173V1131M0 610.500H1912M780.500 600.500h20v20h-20z" stroke="#f4f4f4" />
    </Sheet>
  );
}

const EdgeStrip = styled.div`position: absolute; top: 0; right: 0; width: 8px; height: 100%; background: linear-gradient(90deg, #b8cde8 6px, #2fd3ee 6px, #2fd3ee 7px, #10202c 7px);`;
const DocControls = styled.div`position: absolute; top: 9px; left: 1850px; display: flex; gap: 8px;`;

/* ---------- command line ---------- */
const Console = styled.div`
  position: absolute; left: 390px; top: 874px; width: 1140px; display: flex; flex-direction: column; letter-spacing: 0;
  font-family: "DejaVu Sans Mono", "Liberation Mono", monospace; font-size: 11.63px;
`;
const Echo = styled.div`
  align-self: flex-start; margin: 0 0 5px 62px; height: 15px; line-height: 15px; padding: 0 2px; white-space: pre;
  border-radius: 2px; background: ${p => p.$bg}; color: ${p => p.$c};
`;
const CommandBar = styled.div`height: 27px; margin-top: -3px; display: flex; align-items: center; background: ${C.dark}; border-radius: 2px; padding: 1px 1px 1px 4px;`;
const Grip = styled.span`width: 5px; height: 17px; background: radial-gradient(circle, #b4b4b4 0.9px, transparent 1.1px) 0 0 / 2.500px 2.830px;`;
const Prompt = styled.div`
  flex: 1; height: 25px; display: flex; align-items: center; padding: 0 3px; border-radius: 2px; background: #b0b0b0; color: #555; font-style: italic;
`;
const PromptText = styled.span`flex: 1; padding-left: 6px;`;

/* ---------- floating palette ---------- */
const Palette = styled.aside`position: absolute; left: 1683px; top: 244px; width: 221px;`;
const PaletteHead = styled.div`
  height: 25px; margin-left: 1px; border-radius: 4px; background: linear-gradient(#d8d8d8, #fff 60%); display: flex; align-items: center;
  color: #222; font-size: 13px; letter-spacing: 0;
`;
const PaletteName = styled.div`width: 138px; text-align: center;`;
const PaletteBody = styled.div`display: flex; gap: 6px; margin-top: 6px;`;
const Categories = styled.div`width: 35px; display: grid; gap: 5px; align-content: start;`;
const Category = styled.div`
  width: 35px; height: 35px; border-radius: 3px; overflow: hidden; border: 1px solid #fff; display: grid; place-items: center;
  background: ${p => (p.$plain ? '#f4f4f4' : 'linear-gradient(160deg, #b9bcc4, #e6e7ea 60%, #c8cace)')};
`;
const Commands = styled.div`
  width: 180px; height: 536px; margin-top: 1px; border-radius: 4px; background: rgba(255, 255, 255, 0.08); padding: 5px 2px 0 10px; display: flex; justify-content: space-between;
`;
const Groups = styled.div`padding-top: 5px; height: 522px; overflow: hidden;`;
const Group = styled.div`display: grid; grid-template-columns: repeat(3, 48px); gap: 7px;`;
const Command = styled.div`width: 48px; height: 48px; border-radius: 4px; overflow: hidden; background: #fdfdfd;`;
const Rule = styled.div`width: 159px; height: 3px; margin: 11px 0 10px; background: linear-gradient(90deg, transparent, #8e8e8e 50%, transparent); border-radius: 50%;`;
const Scroll = styled.div`width: 3px; height: 395px; background: linear-gradient(90deg, #fff 33%, #888);`;
const GROUPS = [[0, 1, 2], [3, 4, 5, 6, 7, 8], [9, 10, null, 11, 12, 13], [14, 15, null, 16, 17, null, 18, 19, 20], [21, 22, 23]];

function ToolPalette() {
  return (
    <Palette>
      <PaletteHead>
        <PaletteName>FE</PaletteName>
        <Cell $w={22}><Icon n="pgear" /></Cell><Cell $w={17}><Icon n="pin" size={15} /></Cell><Cell $w={24}><Icon n="pmin" size={14} /></Cell><Cell $w={16}><Icon n="px" size={14} /></Cell>
      </PaletteHead>
      <PaletteBody>
        <Categories>{[0, 1, 2, 3, 4, 5, 6, 7, 8, 9].map(i => <Category key={i} $plain={i === 0 || i === 9}><Icon n={`c${i}`} /></Category>)}</Categories>
        <Commands>
          <Groups>
            {GROUPS.map((g, i) => (
              <React.Fragment key={i}>
                {i > 0 && <Rule />}
                <Group>{g.map((k, j) => (k === null ? <span key={j} /> : <Command key={j}><Icon n={`f${k}`} /></Command>))}</Group>
              </React.Fragment>
            ))}
          </Groups>
          <Scroll />
        </Commands>
      </PaletteBody>
    </Palette>
  );
}

/* ---------- bottom bars ---------- */
const StatusRow = styled.div`height: 29px; flex: none; display: flex; border-top: 1px solid ${C.panel}; padding-left: 14px;`;
const LayoutTab = styled.div`
  width: ${p => p.$w}px; height: 17px; margin-right: ${p => p.$mr || 0}px; display: flex; align-items: center; justify-content: center; border-radius: 2px 2px 8px 8px;
  background: ${p => (p.$on ? C.panel : '#2c333f')}; color: ${p => (p.$on ? '#fff' : '#b4b8bf')}; font-weight: ${p => (p.$on ? 700 : 400)};
`;
const Status = styled.div`margin-left: auto; padding: 1px 3px 0 0; display: flex; gap: 0;`;
const Item = styled.div`
  width: ${p => p.$w}px; height: 24px; margin-right: ${p => p.$mr || 0}px; display: flex; align-items: center; justify-content: center; background: ${p => (p.$on ? '#608fc2' : '#363e4c')}; color: #f0f0f0;
`;
const STATUS = [['s1', 22, 2, 1], ['s2', 24, 1], ['s3', 22, 0, 1], ['v', 16, 0], ['s4', 22, 0], ['v', 18, 1], ['s5', 24, 1], ['s6', 22, 0, 1], ['v', 15, 4], ['s7', 24, 0], ['s8', 23, 0], ['s9', 24, 4], ['gear', 22, 0], ['v', 18, 2], ['s11', 21, 4], ['s12', 24, 4], ['s13', 22, 4, 1], ['s14', 22, 3], ['s15', 24, 0], ['s16', 23, 0]];

const Taskbar = styled.footer`
  height: 40px; flex: none; display: flex; align-items: stretch; color: #fff;
  background: linear-gradient(90deg, #21363e, #243a43 35%, #22343f 68%, #1f2e48 80%, #1b2743);
`;
const TaskSearch = styled.div`width: 344px; display: flex; align-items: center; gap: 10px; padding-left: 12px; background: #f2f2f2; border: 1px solid #c4c4c4; color: #222; font-size: 15px; letter-spacing: -0.45px;`;
const Task = styled.div`
  width: ${p => p.$w}px; margin-left: ${p => p.$ml}px; display: flex; align-items: center; justify-content: center;
  border-bottom: 2px solid #76b9ed; background: ${p => (p.$on ? '#52646b' : 'transparent')};
`;
const Tray = styled.div`margin-left: auto; display: flex; align-items: center; padding-right: 4px; border-right: 1px solid #5c667c; margin-right: 4px;`;
const Clock = styled.div`width: 60px; text-align: center; line-height: 18px; letter-spacing: -0.5px; white-space: nowrap;`;

export default function App() {
  return (
    <Screen>
      <Global />
      <Header />
      <RibbonBar />
      <DocTabs>
        <DocTab $w={124}>Начало</DocTab>
        <DocTab $w={125}>S9_MZ*<Icon n="tabx" /></DocTab>
        <DocTab $w={125} $mr={7} $on>S9_WZ*<Icon n="tabx" /></DocTab>
        <DocTab $w={21} $plus><Icon n="plus" /></DocTab>
      </DocTabs>
      <Work>
        <Drawing />
        <EdgeStrip />
        <DocControls><Icon n="dmin" size={12} /><Icon n="dres" size={12} /><Icon n="dx" size={12} /></DocControls>
        <Console>
          <Echo $bg="#424242" $c="#b0b0b0">Команда:</Echo>
          <Echo $bg="#545454" $c="#dadada">** РАСТЯГИВАНИЕ **</Echo>
          <Echo $bg="#666" $c="#fff">Точка растягивания или [Базовая точка/Копировать/ОТменить/выХод]:</Echo>
          <CommandBar>
            <Grip />
            <Cell $w={21}><Icon n="wx" size={9} /></Cell>
            <Cell $w={25}><Icon n="wrench" size={14} /></Cell>
            <Prompt><Icon n="prompt" /><Caret $c="#555" $m="0 0 0 3px" /><PromptText>Введите команду</PromptText><Svg width="7" height="5"><path d="M3.500 0L7 5H0Z" fill="#555" /></Svg></Prompt>
          </CommandBar>
        </Console>
        <ToolPalette />
      </Work>
      <StatusRow>
        <LayoutTab $w={61} $mr={5}>Модель</LayoutTab>
        <LayoutTab $w={55} $mr={7} $on>Blatt 1</LayoutTab>
        <LayoutTab $w={21}><Icon n="plus" /></LayoutTab>
        <Status>
          <Item $w={37} $mr={4}>ЛИСТ</Item>
          {STATUS.map(([n, w, mr, on], i) => <Item key={i} $w={w} $mr={mr} $on={on}>{n === 'v' ? <Caret $s={4} /> : <Icon n={n} size={20} />}</Item>)}
        </Status>
      </StatusRow>
      <Taskbar>
        <Cell $w={48}><Icon n="start" /></Cell>
        <TaskSearch><Icon n="lens" size={17} />Введите здесь текст для поиска</TaskSearch>
        <Task $w={40} $ml={7}><Icon n="folder" size={23} /></Task>
        <Task $w={40} $ml={9}><Icon n="teams" /></Task>
        <Task $w={45} $ml={5} $on><Icon n="aslogo" /></Task>
        <Task $w={40} $ml={8}><Icon n="calc" size={23} /></Task>
        <Task $w={40} $ml={9}><Icon n="chrome" size={23} /></Task>
        <Tray>
          <Cell $w={22}><Icon n="chev" size={13} /></Cell>
          <Cell $w={25}><Icon n="net" size={17} /></Cell>
          <Cell $w={24}><Icon n="snd" size={17} /></Cell>
          <Cell $w={34}>ENG</Cell>
          <Clock>12:57<br />27.09.2022</Clock>
          <Gap $w={10} />
          <Cell $w={34}><Icon n="note" size={17} /></Cell>
          <Gap $w={8} />
        </Tray>
      </Taskbar>
    </Screen>
  );
}
